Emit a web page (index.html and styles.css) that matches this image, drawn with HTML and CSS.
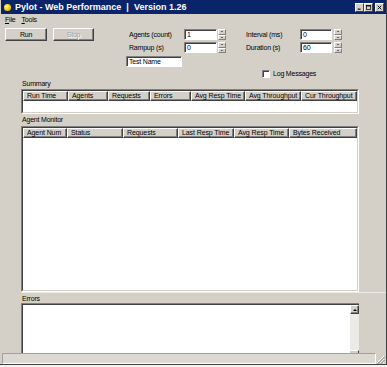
FILE: index.html
```html
<!DOCTYPE html>
<html>
<head>
<meta charset="utf-8">
<title>Pylot</title>
<link rel="stylesheet" href="styles.css">
</head>
<body>
<div class="window">
  <div class="titlebar">
    <span class="app-icon"></span>
    <span class="title">Pylot - Web Performance&nbsp; |&nbsp; Version 1.26</span>
    <span class="tb-spacer"></span>
    <span class="wbtn"><svg width="7" height="7" viewBox="0 0 7 7"><rect x="1" y="5" width="4" height="1.5" fill="#000"/></svg></span>
    <span class="wbtn"><svg width="7" height="7" viewBox="0 0 7 7"><rect x="0.5" y="0.5" width="6" height="6" fill="none" stroke="#000" stroke-width="1"/><rect x="0.5" y="0.5" width="6" height="1.5" fill="#000"/></svg></span>
    <span class="wbtn close"><svg width="7" height="7" viewBox="0 0 7 7"><path d="M1 1 L6 6 M6 1 L1 6" stroke="#000" stroke-width="1.3"/></svg></span>
  </div>
  <div class="menubar">
    <span class="menu-item"><u>F</u>ile</span>
    <span class="menu-item"><u>T</u>ools</span>
  </div>
  <div class="top">
    <div class="buttons">
      <span class="btn run">Run</span>
      <span class="btn stop">Stop</span>
    </div>
    <div class="params">
      <div class="prow">
        <span class="plabel">Agents (count)</span>
        <span class="field w33">1</span>
        <span class="spin"><span class="sp up"><i></i></span><span class="sp down"><i></i></span></span>
        <span class="plabel second">Interval (ms)</span>
        <span class="field w32">0</span>
        <span class="spin gap2"><span class="sp up"><i></i></span><span class="sp down"><i></i></span></span>
      </div>
      <div class="prow">
        <span class="plabel">Rampup (s)</span>
        <span class="field w33">0</span>
        <span class="spin"><span class="sp up"><i></i></span><span class="sp down"><i></i></span></span>
        <span class="plabel second">Duration (s)</span>
        <span class="field w32">60</span>
        <span class="spin gap2"><span class="sp up"><i></i></span><span class="sp down"><i></i></span></span>
      </div>
      <div class="prow testrow">
        <span class="field testname">Test Name</span>
      </div>
    </div>
  </div>
  <div class="logrow">
    <span class="checkbox"></span>
    <span class="loglabel">Log Messages</span>
  </div>
  <div class="section-label sum-label">Summary</div>
  <div class="grid summary">
    <div class="grid-inner">
      <div class="header sum-cols">
        <span>Run Time</span><span>Agents</span><span>Requests</span><span>Errors</span><span>Avg Resp Time</span><span>Avg Throughput</span><span>Cur Throughput</span>
      </div>
    </div>
  </div>
  <div class="section-label mon-label">Agent Monitor</div>
  <div class="grid monitor">
    <div class="grid-inner">
      <div class="header mon-cols">
        <span>Agent Num</span><span>Status</span><span>Requests</span><span>Last Resp Time</span><span>Avg Resp Time</span><span>Bytes Received</span>
      </div>
    </div>
  </div>
  <div class="errors-band">Errors</div>
  <div class="grid errors">
    <div class="grid-inner errors-inner">
      <div class="errors-text"></div>
      <div class="vscroll">
        <span class="sbtn"><i></i></span>
        <span class="track"></span>
        <span class="sbtn-cut"></span>
      </div>
    </div>
  </div>
  <div class="statusbar">
    <span class="status-panel"></span>
    <span class="grip"><svg width="9" height="9" viewBox="0 0 9 9"><path d="M8 1 L1 8 M8 4 L4 8 M8 7 L7 8" stroke="#fff" stroke-width="1"/><path d="M8.8 1.8 L1.8 8.8 M8.8 4.8 L4.8 8.8" stroke="#808080" stroke-width="1"/></svg></span>
  </div>
</div>
</body>
</html>
```

FILE: styles.css
```css
html, body {
  margin: 0;
  padding: 0;
}
body {
  width: 387px;
  height: 367px;
  overflow: hidden;
  background: #f4f4f2;
}
.window {
  box-sizing: border-box;
  width: 387px;
  height: 365px;
  background: #d4d0c8;
  border-right: 1px solid #404040;
  border-bottom: 1px solid #404040;
  display: flex;
  flex-direction: column;
  font-family: "Liberation Sans", Arial, sans-serif;
  font-size: 7px;
  letter-spacing: -0.2px;
  color: #000;
  overflow: hidden;
}
.titlebar {
  height: 14px;
  margin-left: 1px;
  background: #0a246a;
  display: flex;
  align-items: center;
  padding: 0 2px 0 3px;
  flex: none;
}
.app-icon {
  width: 7px;
  height: 7px;
  border-radius: 50%;
  background: radial-gradient(circle at 35% 35%, #fff8a0 0, #ffd800 45%, #d89800 100%);
  flex: none;
}
.title {
  margin-left: 4px;
  color: #fff;
  font-weight: bold;
  font-size: 9px;
  letter-spacing: 0;
  white-space: nowrap;
}
.tb-spacer {
  flex: 1;
}
.wbtn {
  box-sizing: border-box;
  width: 9px;
  height: 9px;
  background: #d4d0c8;
  border-top: 1px solid #fff;
  border-left: 1px solid #fff;
  border-right: 1px solid #404040;
  border-bottom: 1px solid #404040;
  display: flex;
  align-items: center;
  justify-content: center;
  flex: none;
}
.wbtn svg {
  width: 5px;
  height: 5px;
}
.wbtn.close {
  margin-left: 2px;
}
.menubar {
  height: 12px;
  display: flex;
  align-items: center;
  padding-left: 5px;
  flex: none;
}
.menu-item {
  margin-right: 6px;
  line-height: 12px;
}
.top {
  display: flex;
  padding-top: 2px;
  padding-left: 5px;
  flex: none;
}
.buttons {
  display: flex;
  flex: none;
}
.btn {
  box-sizing: border-box;
  height: 13px;
  background: #d4d0c8;
  border-top: 1px solid #fff;
  border-left: 1px solid #fff;
  border-right: 1px solid #404040;
  border-bottom: 1px solid #404040;
  box-shadow: inset -1px -1px 0 #808080;
  display: flex;
  align-items: center;
  justify-content: center;
  line-height: 11px;
}
.btn.run {
  width: 42px;
}
.btn.stop {
  width: 41px;
  margin-left: 6px;
  color: #a0a0a0;
  text-shadow: 1px 1px 0 #fff;
}
.params {
  margin-left: 32px;
  padding-top: 1px;
  display: flex;
  flex-direction: column;
}
.prow {
  display: flex;
  align-items: center;
  height: 11px;
  margin-bottom: 2px;
}
.prow.testrow {
  margin-top: 1px;
  margin-bottom: 0;
}
.plabel {
  box-sizing: border-box;
  width: 58px;
  padding-left: 3px;
  white-space: nowrap;
}
.plabel.second {
  width: 54px;
  padding-left: 0;
  margin-left: 20px;
}
.field {
  box-sizing: border-box;
  height: 11px;
  background: #fff;
  border-top: 1px solid #808080;
  border-left: 1px solid #808080;
  border-right: 1px solid #fff;
  border-bottom: 1px solid #fff;
  box-shadow: inset 1px 1px 0 #404040;
  padding-left: 2px;
  line-height: 9px;
  white-space: nowrap;
}
.field.w33 {
  width: 33px;
}
.field.w32 {
  width: 32px;
}
.field.testname {
  width: 56px;
  margin-left: 0;
}
.spin {
  width: 8px;
  height: 11px;
  margin-left: 1px;
  display: flex;
  flex-direction: column;
}
.spin.gap2 {
  margin-left: 2px;
}
.sp {
  box-sizing: border-box;
  flex: 1;
  background: #d4d0c8;
  border-top: 1px solid #fff;
  border-left: 1px solid #fff;
  border-right: 1px solid #808080;
  border-bottom: 1px solid #808080;
  display: flex;
  align-items: center;
  justify-content: center;
}
.sp i {
  display: block;
  width: 0;
  height: 0;
  border-left: 1.5px solid transparent;
  border-right: 1.5px solid transparent;
}
.sp.up i {
  border-bottom: 1.5px solid #000;
}
.sp.down i {
  border-top: 1.5px solid #000;
}
.logrow {
  display: flex;
  align-items: center;
  height: 8px;
  margin-top: 3px;
  padding-left: 262px;
  flex: none;
}
.checkbox {
  box-sizing: border-box;
  width: 8px;
  height: 8px;
  background: #fff;
  border-top: 1px solid #808080;
  border-left: 1px solid #808080;
  border-right: 1px solid #fff;
  border-bottom: 1px solid #fff;
  box-shadow: inset 1px 1px 0 #404040;
}
.loglabel {
  margin-left: 3px;
  line-height: 8px;
}
.section-label {
  padding-left: 22px;
  flex: none;
}
.sum-label {
  height: 11px;
  line-height: 11px;
}
.mon-label {
  height: 12px;
  line-height: 12px;
}
.grid {
  box-sizing: border-box;
  margin-left: 21px;
  width: 338px;
  border-top: 1px solid #808080;
  border-left: 1px solid #808080;
  border-right: 1px solid #fff;
  border-bottom: 1px solid #fff;
  flex: none;
}
.grid-inner {
  box-sizing: border-box;
  height: 100%;
  background: #fff;
  border-top: 1px solid #404040;
  border-left: 1px solid #404040;
  border-right: 1px solid #d4d0c8;
  border-bottom: 1px solid #d4d0c8;
}
.grid.summary {
  height: 25px;
}
.grid.monitor {
  height: 166px;
}
.header {
  display: grid;
  height: 10px;
}
.sum-cols {
  grid-template-columns: 45px 40px 42px 41px 54px 56px 56px;
}
.mon-cols {
  grid-template-columns: 44px 56px 55px 56px 55px 68px;
}
.header span {
  box-sizing: border-box;
  background: #d4d0c8;
  border-top: 1px solid #fff;
  border-left: 1px solid #fff;
  border-right: 1px solid #404040;
  border-bottom: 1px solid #404040;
  box-shadow: inset -1px -1px 0 #808080;
  padding-left: 3px;
  font-size: 7px;
  letter-spacing: -0.1px;
  line-height: 8px;
  white-space: nowrap;
  overflow: hidden;
}
.errors-band {
  height: 10px;
  margin-left: 21px;
  padding-left: 1px;
  border-top: 1px solid #ecebe6;
  line-height: 11px;
  flex: none;
}
.grid.errors {
  height: 50px;
  border-right: none;
  border-bottom: none;
}
.errors-inner {
  display: flex;
  border-bottom: none;
  border-right: none;
}
.errors-text {
  flex: 1;
}
.vscroll {
  width: 9px;
  display: flex;
  flex-direction: column;
  background: #ecebe6;
}
.sbtn {
  box-sizing: border-box;
  height: 9px;
  background: #d4d0c8;
  border-top: 1px solid #fff;
  border-left: 1px solid #fff;
  border-right: 1px solid #404040;
  border-bottom: 1px solid #404040;
  box-shadow: inset -1px -1px 0 #808080;
  display: flex;
  align-items: center;
  justify-content: center;
}
.sbtn i {
  display: block;
  width: 0;
  height: 0;
  border-left: 2px solid transparent;
  border-right: 2px solid transparent;
  border-bottom: 2px solid #000;
}
.track {
  flex: 1;
}
.sbtn-cut {
  height: 2px;
  border-top: 1px solid #fff;
  border-right: 1px solid #404040;
  background: #d4d0c8;
}
.statusbar {
  height: 11px;
  display: flex;
  align-items: stretch;
  padding: 0 1px 0 2px;
  flex: none;
}
.status-panel {
  flex: 1;
  box-sizing: border-box;
  background: #dcd9d2;
  border-top: 1px solid #a0a0a0;
  border-left: 1px solid #a0a0a0;
  border-right: 1px solid #fff;
  border-bottom: 1px solid #fff;
}
.grip {
  width: 9px;
  display: flex;
  align-items: flex-end;
}
```
